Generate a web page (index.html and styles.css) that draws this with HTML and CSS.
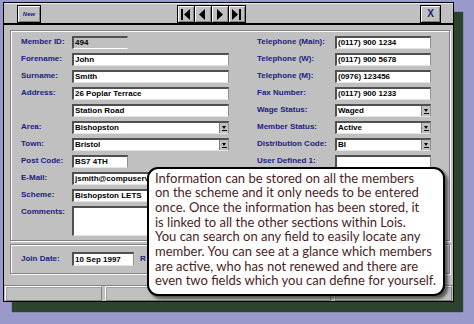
FILE: index.html
```html
<!DOCTYPE html>
<html>
<head>
<meta charset="utf-8">
<link rel="stylesheet" href="styles.css">
</head>
<body>
<div class="window">
  <div class="toolbar">
    <button class="btn new">New</button>
    <div class="nav">
      <span class="navbtn"><svg width="15" height="14" viewBox="0 0 15 14"><rect x="3" y="2" width="2" height="11"/><polygon points="12,2 6,7.5 12,13"/></svg></span>
      <span class="navbtn"><svg width="15" height="14" viewBox="0 0 15 14"><polygon points="10,2 4,7.5 10,13"/></svg></span>
      <span class="navbtn"><svg width="15" height="14" viewBox="0 0 15 14"><polygon points="5,2 11,7.5 5,13"/></svg></span>
      <span class="navbtn"><svg width="15" height="14" viewBox="0 0 15 14"><polygon points="3,2 9,7.5 3,13"/><rect x="10" y="2" width="2" height="11"/></svg></span>
    </div>
    <button class="btn close">X</button>
  </div>

  <div class="frame main">
    <div class="col left">
      <span class="lbl">Member ID:</span><div class="field ro short">494</div>
      <span class="lbl">Forename:</span><div class="field">John</div>
      <span class="lbl">Surname:</span><div class="field">Smith</div>
      <span class="lbl">Address:</span><div class="field">26 Poplar Terrace</div>
      <span class="lbl"></span><div class="field">Station Road</div>
      <span class="lbl">Area:</span><div class="field drop"><span class="val">Bishopston</span><span class="arrow"></span></div>
      <span class="lbl">Town:</span><div class="field drop"><span class="val">Bristol</span><span class="arrow"></span></div>
      <span class="lbl">Post Code:</span><div class="field short">BS7 4TH</div>
      <span class="lbl">E-Mail:</span><div class="field">jsmith@compuserv</div>
      <span class="lbl">Scheme:</span><div class="field">Bishopston LETS</div>
      <span class="lbl">Comments:</span><div class="field tall"></div>
    </div>
    <div class="col right">
      <span class="lbl">Telephone (Main):</span><div class="field">(0117) 900 1234</div>
      <span class="lbl">Telephone (W):</span><div class="field">(0117) 900 5678</div>
      <span class="lbl">Telephone (M):</span><div class="field">(0976) 123456</div>
      <span class="lbl">Fax Number:</span><div class="field">(0117) 900 1233</div>
      <span class="lbl">Wage Status:</span><div class="field drop"><span class="val">Waged</span><span class="arrow"></span></div>
      <span class="lbl">Member Status:</span><div class="field drop"><span class="val">Active</span><span class="arrow"></span></div>
      <span class="lbl">Distribution Code:</span><div class="field drop"><span class="val">BI</span><span class="arrow"></span></div>
      <span class="lbl">User Defined 1:</span><div class="field"></div>
    </div>
  </div>

  <div class="frame dates">
    <span class="lbl">Join Date:</span><div class="field date">10 Sep 1997</div>
    <span class="lbl renew">R</span>
  </div>

  <div class="status">
    <div class="panel p1"></div>
    <div class="panel p2"></div>
    <div class="panel p3"></div>
  </div>

  <div class="callout">
    <span class="line">Information can be stored on all the members</span>
    <span class="line">on the scheme and it only needs to be entered</span>
    <span class="line">once. Once the information has been stored, it</span>
    <span class="line">is linked to all the other sections within Lois.</span>
    <span class="line">You can search on any field to easily locate any</span>
    <span class="line">member. You can see at a glance which members</span>
    <span class="line">are active, who has not renewed and there are</span>
    <span class="line">even two fields which you can define for yourself.</span>
  </div>
</div>
</body>
</html>
```

FILE: styles.css
```css
* { box-sizing: border-box; }
html, body { margin: 0; padding: 0; }
body {
  background: #9999cc;
  width: 474px;
  height: 324px;
  overflow: hidden;
  font-family: "Liberation Sans", Arial, sans-serif;
}
.window {
  position: relative;
  margin: 2px 0 0 3px;
  width: 451px;
  height: 300px;
  border: 1px solid #000;
  background: #c0c0c0;
  box-shadow: 9px 10px 1px #2c442c;
  display: flex;
  flex-direction: column;
}
.toolbar {
  height: 22px;
  flex: none;
  display: flex;
  align-items: center;
  padding: 0 12px 0 13px;
  border-top: 1px solid #e8e8e8;
  border-bottom: 2px solid #000;
}
.btn {
  margin: 0;
  padding: 0;
  border: 1px solid #000;
  background: #c0c0c0;
  box-shadow: inset 1px 1px #fff, inset -1px -1px #808080;
  color: #202080;
  font-family: "Liberation Sans", Arial, sans-serif;
}
.new {
  width: 24px;
  height: 18px;
  font-size: 6px;
  font-style: italic;
  font-weight: bold;
}
.close {
  margin-left: auto;
  width: 21px;
  height: 18px;
  font-size: 10px;
  font-weight: bold;
}
.nav {
  display: flex;
  margin-left: 136px;
}
.navbtn {
  width: 17.5px;
  height: 18px;
  border: 1px solid #000;
  box-shadow: inset 1px 1px #fff, inset -1px -1px #808080;
  display: flex;
  align-items: center;
  justify-content: center;
}
.navbtn + .navbtn { margin-left: -0.5px; }
.navbtn svg { fill: #000; display: block; }

.frame {
  margin-left: 6px;
  width: 440px;
  flex: none;
  border: 1px solid #808080;
  box-shadow: 1px 1px #fff, inset 1px 1px #fff;
}
.main {
  margin-top: 5px;
  height: 211px;
  display: flex;
  gap: 28px;
  padding: 5px 0 0 10px;
}
.col {
  display: grid;
  row-gap: 4px;
  align-content: start;
}
.left { grid-template-columns: 51px 157px; }
.right { grid-template-columns: 78px 96px; }
.lbl {
  font-size: 8px;
  font-weight: bold;
  color: #202080;
  line-height: 12px;
  white-space: nowrap;
  align-self: start;
}
.field {
  height: 13px;
  background: #fff;
  border-style: solid;
  border-width: 2px 1px 1px 2px;
  border-color: #505050 #909090 #e4e4e4 #505050;
  font-size: 8px;
  font-weight: bold;
  color: #000;
  padding-left: 1px;
  line-height: 10px;
  white-space: nowrap;
  overflow: hidden;
  display: flex;
  align-items: center;
}
.field.short { width: 56px; }
.field.ro {
  background: #c0c0c0;
  border-right-color: #c0c0c0;
  border-bottom-color: #fff;
}
.field.tall { height: 30px; }
.drop .val { flex: 1; }
.arrow {
  width: 9px;
  height: 100%;
  flex: none;
  background: #c0c0c0;
  border-left: 1px solid #808080;
  display: flex;
  flex-direction: column;
  align-items: center;
  justify-content: center;
  gap: 1px;
}
.arrow::before {
  content: "";
  border-left: 2.5px solid transparent;
  border-right: 2.5px solid transparent;
  border-top: 3px solid #000;
}
.arrow::after {
  content: "";
  width: 5px;
  height: 1px;
  background: #000;
}

.dates {
  margin-top: 3px;
  height: 30px;
  display: flex;
  align-items: flex-start;
  padding: 7px 0 0 10px;
}
.dates .lbl { width: 51px; margin-top: 1px; }
.field.date { width: 62px; height: 14px; }
.dates .renew { margin-left: 6px; }

.status {
  margin-top: 11px;
  flex: 1;
  display: flex;
  gap: 3px;
  padding: 0 0 0 1px;
  border-top: 1px solid #808080;
}
.panel {
  height: 15px;
  border-style: solid;
  border-width: 1px;
  border-color: #fff #808080 #808080 #fff;
  box-shadow: inset 1px 1px #a0a0a0;
}
.p1 { width: 97px; }
.p2 { width: 226px; }
.p3 { width: 118px; }

.callout {
  position: absolute;
  left: 143px;
  top: 164px;
  width: 298px;
  height: 129px;
  background: #fff;
  border: 2px solid #000;
  border-radius: 11px;
  box-shadow: 3px 3px 3px rgba(0,0,0,0.55);
  padding: 1.5px 0 0 6px;
  font-family: Lato, sans-serif;
  font-size: 13px;
  line-height: 14.7px;
  color: #4a1e1e;
}
.line { display: block; white-space: nowrap; }
```
